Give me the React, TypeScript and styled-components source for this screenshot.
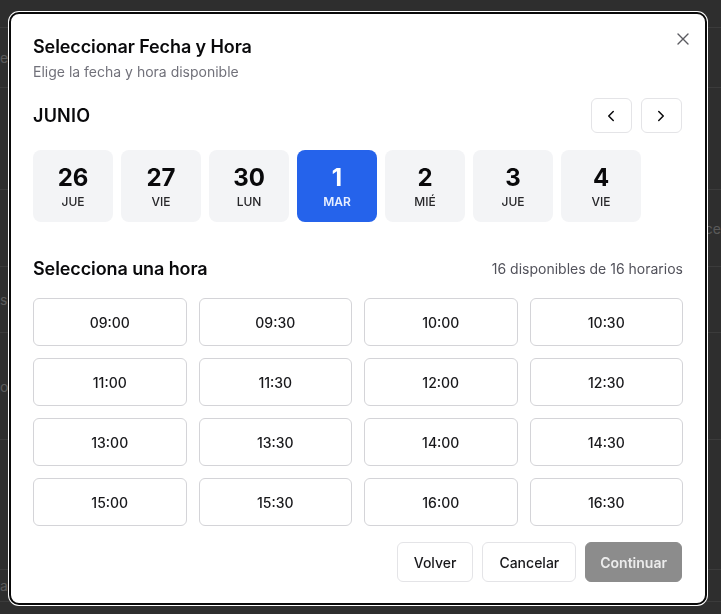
import React, { useState } from 'react';
import styled, { createGlobalStyle } from 'styled-components';
import { ChevronLeft, ChevronRight } from 'lucide-react';

const GlobalStyle = createGlobalStyle`
  html, body {
    margin: 0;
    padding: 0;
    background: #5c5c5c;
    font-family: Inter, 'Liberation Sans', sans-serif;
    -webkit-font-smoothing: antialiased;
  }
  * { box-sizing: border-box; }
`;

/* page behind the modal */
const Page = styled.div`
  height: 614px;
  overflow: hidden;
  display: flex;
  flex-direction: column;
`;

const PageRow = styled.div<{ $h: number }>`
  height: ${(p) => p.$h}px;
  border-bottom: 1px solid #777;
  display: flex;
  align-items: center;
  justify-content: space-between;
  color: #b4b4b4;
  font-size: 14px;
`;

const Overlay = styled.div`
  position: fixed;
  inset: 0;
  background: rgba(0, 0, 0, 0.5);
  display: flex;
  align-items: flex-start;
  padding: 12px 0 0 9px;
`;

const Dialog = styled.div`
  position: relative;
  width: 698px;
  background: #fff;
  border: 2px solid #0a0a0a;
  border-radius: 10px;
  box-shadow: 0 0 0 1px #fff;
  padding: 22px 22px 21px 22px;
  display: flex;
  flex-direction: column;
  color: #09090b;
`;

const CloseButton = styled.button`
  position: absolute;
  top: 17px;
  right: 14px;
  width: 16px;
  height: 16px;
  padding: 0;
  border: none;
  background: none;
  display: flex;
  align-items: center;
  justify-content: center;
  color: #3f3f46;
  opacity: 0.85;
  cursor: pointer;
`;

const Title = styled.h2`
  margin: 0;
  font-size: 18px;
  line-height: 22px;
  font-weight: 600;
  letter-spacing: -0.1px;
`;

const Subtitle = styled.p`
  margin: 4px 0 0;
  font-size: 14px;
  line-height: 20px;
  color: #71717a;
`;

const MonthBar = styled.div`
  margin-top: 16px;
  display: flex;
  align-items: center;
  justify-content: space-between;
  height: 35px;
`;

const Month = styled.div`
  font-size: 18px;
  font-weight: 600;
  letter-spacing: 0.2px;
`;

const NavGroup = styled.div`
  display: flex;
  gap: 9px;
  padding-right: 1px;
`;

const NavButton = styled.button`
  width: 41px;
  height: 35px;
  border: 1px solid #e4e4e7;
  border-radius: 6px;
  background: #fff;
  display: flex;
  align-items: center;
  justify-content: center;
  color: #09090b;
  padding: 0 1px 0 0;
  cursor: pointer;
`;

const Days = styled.div`
  margin-top: 17px;
  display: flex;
  gap: 8px;
`;

const DayCard = styled.button<{ $active?: boolean }>`
  width: 80px;
  height: 72px;
  border: none;
  border-radius: 8px;
  background: ${(p) => (p.$active ? '#2563eb' : '#f3f4f6')};
  color: ${(p) => (p.$active ? '#fff' : '#09090b')};
  display: flex;
  flex-direction: column;
  align-items: center;
  justify-content: center;
  gap: 2px;
  font-family: inherit;
  padding: 1px 0 0;
  cursor: pointer;
`;

const DayNum = styled.span`
  font-size: 24px;
  line-height: 28px;
  font-weight: 700;
`;

const DayName = styled.span<{ $active?: boolean }>`
  font-size: 12px;
  line-height: 16px;
  font-weight: ${(p) => (p.$active ? 600 : 500)};
  text-transform: uppercase;
  color: ${(p) => (p.$active ? '#e8efff' : '#27272a')};
`;

const SectionHead = styled.div`
  margin-top: 34px;
  height: 24px;
  display: flex;
  align-items: center;
  justify-content: space-between;
`;

const SectionTitle = styled.h3`
  margin: 0;
  font-size: 18px;
  font-weight: 600;
  letter-spacing: -0.1px;
`;

const Counter = styled.span`
  font-size: 14px;
  color: #52525b;
`;

const TimeGrid = styled.div`
  margin-top: 18px;
  display: grid;
  grid-template-columns: repeat(4, 1fr);
  gap: 12px;
`;

const TimeButton = styled.button`
  height: 48px;
  border: 1px solid #d4d4d8;
  border-radius: 6px;
  background: #fff;
  font-family: inherit;
  font-size: 14px;
  font-weight: 500;
  color: #18181b;
  cursor: pointer;
`;

const Footer = styled.div`
  margin-top: 16px;
  display: flex;
  justify-content: flex-end;
  gap: 9px;
  padding-right: 1px;
`;

const FooterButton = styled.button<{ $primary?: boolean }>`
  height: 40px;
  padding: ${(p) => (p.$primary ? '0 14px' : '0 16px')};
  border-radius: 6px;
  border: 1px solid ${(p) => (p.$primary ? '#8c8c8c' : '#e4e4e7')};
  background: ${(p) => (p.$primary ? '#8c8c8c' : '#fff')};
  color: ${(p) => (p.$primary ? '#ececec' : '#18181b')};
  font-family: inherit;
  font-size: 14px;
  font-weight: ${(p) => (p.$primary ? 600 : 500)};
  cursor: pointer;
`;

const days = [
  { n: 26, d: 'Jue' },
  { n: 27, d: 'Vie' },
  { n: 30, d: 'Lun' },
  { n: 1, d: 'Mar' },
  { n: 2, d: 'Mié' },
  { n: 3, d: 'Jue' },
  { n: 4, d: 'Vie' },
];

const times = [
  '09:00', '09:30', '10:00', '10:30',
  '11:00', '11:30', '12:00', '12:30',
  '13:00', '13:30', '14:00', '14:30',
  '15:00', '15:30', '16:00', '16:30',
];

const bgRows = [
  { h: 28, l: '', r: '' },
  { h: 60, l: 'e', r: '' },
  { h: 102, l: '', r: '' },
  { h: 77, l: '', r: 'ce' },
  { h: 66, l: 's', r: '' },
  { h: 107, l: 'or', r: '' },
  { h: 130, l: '', r: '' },
  { h: 32, l: 'ar', r: '' },
];

export default function App() {
  const [selected, setSelected] = useState(3);

  return (
    <>
      <GlobalStyle />
      <Page>
        {bgRows.map((r, i) => (
          <PageRow key={i} $h={r.h}>
            <span>{r.l}</span>
            <span>{r.r}</span>
          </PageRow>
        ))}
      </Page>
      <Overlay>
        <Dialog>
          <CloseButton aria-label="Cerrar">
            <svg width="12" height="12" viewBox="0 0 12 12" fill="none">
              <path d="M1 1l10 10M11 1L1 11" stroke="currentColor" strokeWidth="1.4" strokeLinecap="round" />
            </svg>
          </CloseButton>
          <Title>Seleccionar Fecha y Hora</Title>
          <Subtitle>Elige la fecha y hora disponible</Subtitle>

          <MonthBar>
            <Month>JUNIO</Month>
            <NavGroup>
              <NavButton aria-label="Anterior">
                <ChevronLeft size={18} strokeWidth={2} />
              </NavButton>
              <NavButton aria-label="Siguiente">
                <ChevronRight size={18} strokeWidth={2} />
              </NavButton>
            </NavGroup>
          </MonthBar>

          <Days>
            {days.map((d, i) => (
              <DayCard key={i} $active={i === selected} onClick={() => setSelected(i)}>
                <DayNum>{d.n}</DayNum>
                <DayName $active={i === selected}>{d.d}</DayName>
              </DayCard>
            ))}
          </Days>

          <SectionHead>
            <SectionTitle>Selecciona una hora</SectionTitle>
            <Counter>16 disponibles de 16 horarios</Counter>
          </SectionHead>

          <TimeGrid>
            {times.map((t) => (
              <TimeButton key={t}>{t}</TimeButton>
            ))}
          </TimeGrid>

          <Footer>
            <FooterButton>Volver</FooterButton>
            <FooterButton>Cancelar</FooterButton>
            <FooterButton $primary>Continuar</FooterButton>
          </Footer>
        </Dialog>
      </Overlay>
    </>
  );
}
